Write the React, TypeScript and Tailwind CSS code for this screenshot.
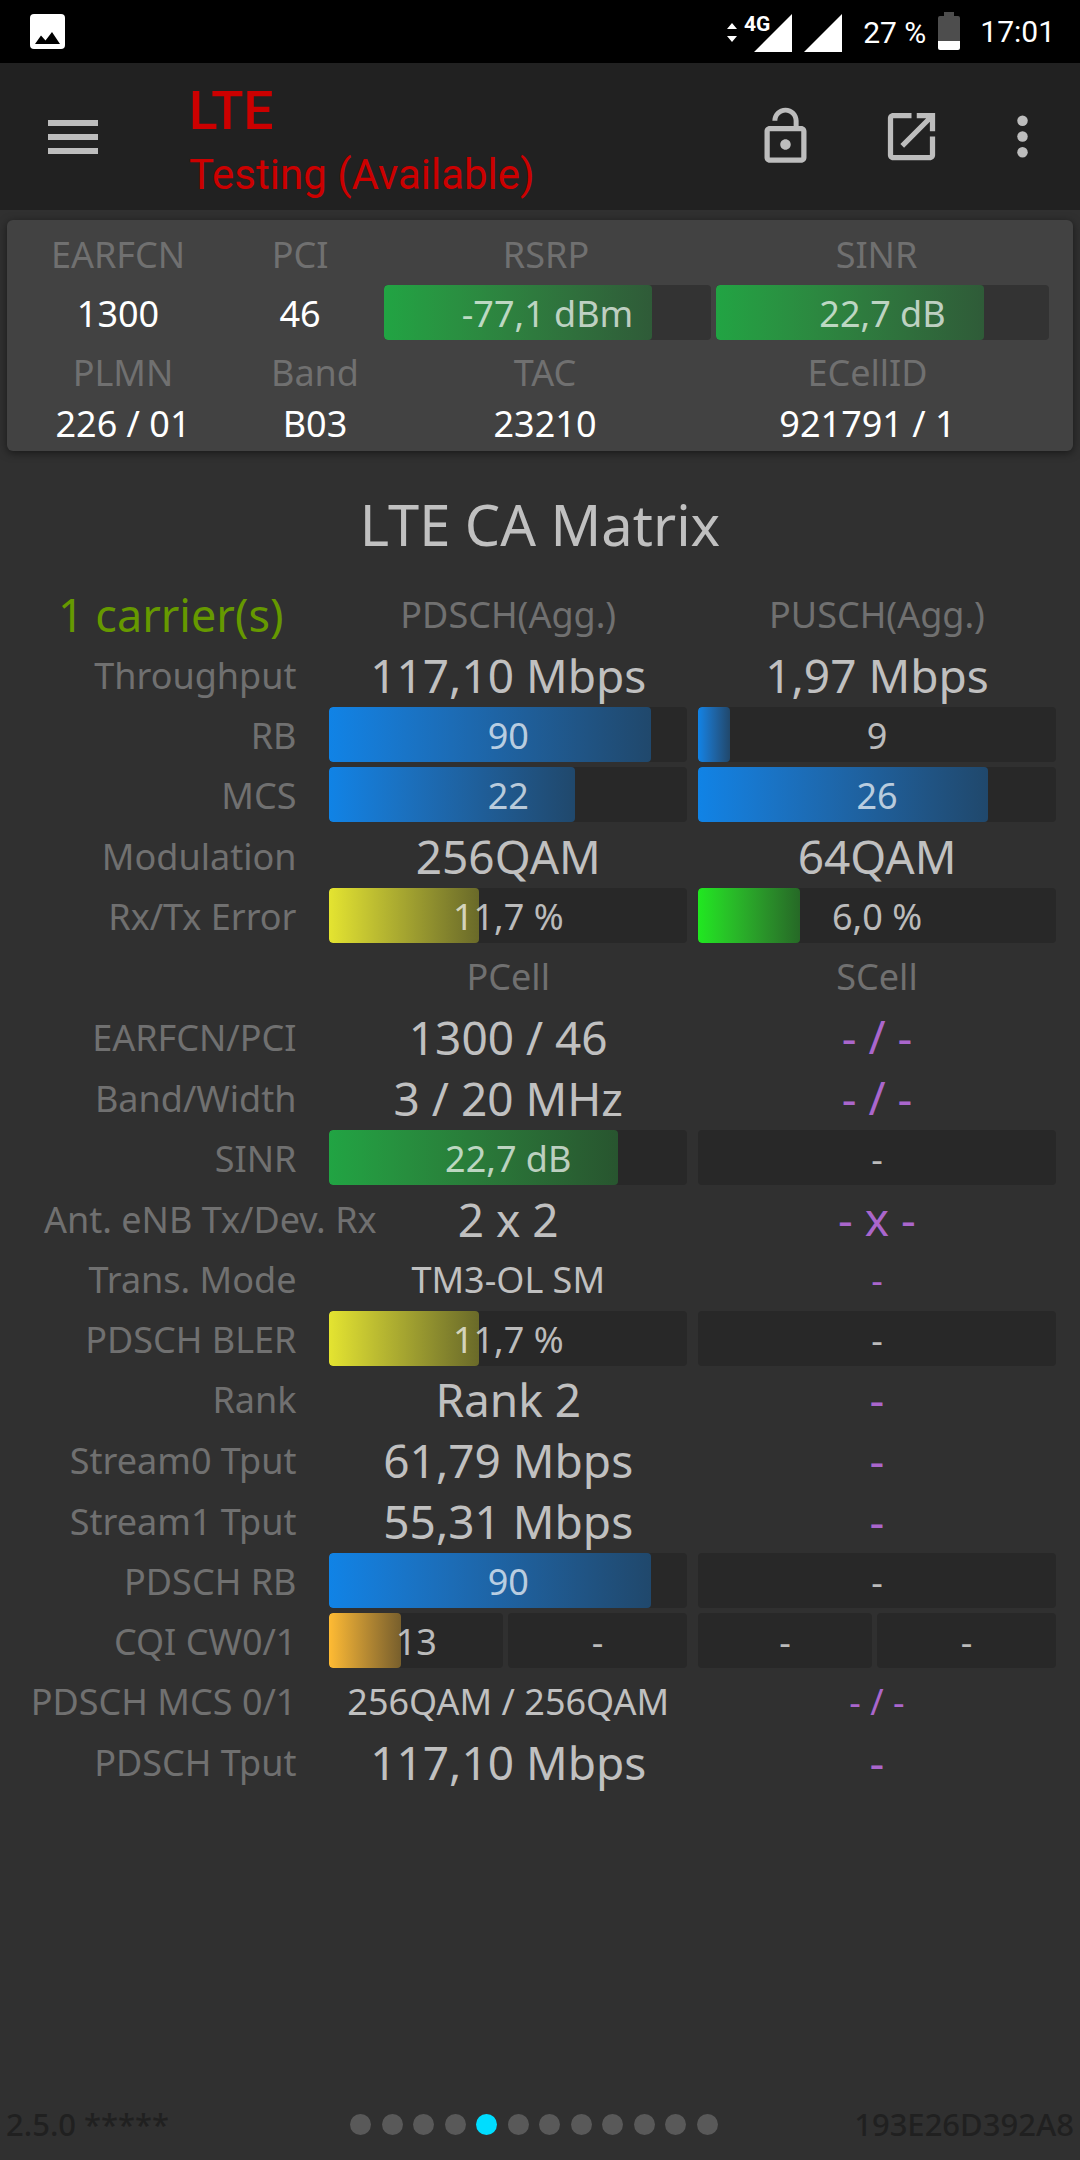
import type { ReactNode } from "react";

const LABEL = "text-[#707070] font-normal";

const FILLS = {
  green: "bg-linear-to-r from-[#21a443] to-[#28552f]",
  cardGreen: "bg-linear-to-r from-[#21a443] to-[#2f5b38]",
  blue: "bg-linear-to-r from-[#1083e6] to-[#20486c]",
  yellow: "bg-linear-to-r from-[#e4e430] to-[#6a6a29]",
  lime: "bg-linear-to-r from-[#20e820] to-[#266926]",
  orange: "bg-linear-to-r from-[#ffbb33] to-[#785f2c]",
};

type BarProps = {
  text: string;
  percent?: number;
  fill?: keyof typeof FILLS;
  track?: string;
};

function Bar({ text, percent = 0, fill = "blue", track = "bg-[#282828]" }: BarProps) {
  return (
    <div
      className={`relative flex h-[55px] w-full items-center justify-center overflow-hidden rounded pt-[2px] ${track}`}
    >
      <div
        className={`absolute inset-y-0 left-0 rounded ${FILLS[fill]}`}
        style={{ width: `${percent}%` }}
      />
      <span className="relative text-[36px] leading-[53px] whitespace-nowrap text-white/70">
        {text}
      </span>
    </div>
  );
}

function Big({ children }: { children: ReactNode }) {
  return <div className="pt-[2px] text-[46px] leading-[58px] text-[#c0c0c0]">{children}</div>;
}

function Small({ children }: { children: ReactNode }) {
  return <div className="pt-[3px] text-[36px] leading-[57px] text-[#c0c0c0]">{children}</div>;
}

function Empty({ children = "-", small = false }: { children?: ReactNode; small?: boolean }) {
  return (
    <div
      className={
        small
          ? "pt-[3px] text-[36px] leading-[57px] text-[#aa66cc]"
          : "text-[46px] leading-[60px] text-[#aa66cc]"
      }
    >
      {children}
    </div>
  );
}

type RowProps = {
  label: string;
  down: ReactNode;
  up: ReactNode;
  tall?: boolean;
  labelClass?: string;
};

function Row({ label, down, up, tall = false, labelClass = "text-right" }: RowProps) {
  return (
    <tr className={tall ? "h-[61px]" : "h-[60px]"}>
      <th
        scope="row"
        className={`p-0 pt-[3px] pr-[33px] text-[36px] leading-[57px] whitespace-nowrap ${LABEL} ${labelClass}`}
      >
        {label}
      </th>
      <td className="p-0 pr-[11px] text-center whitespace-nowrap">
        <div className="flex items-center justify-center">{down}</div>
      </td>
      <td className="p-0 text-center whitespace-nowrap">
        <div className="flex items-center justify-center">{up}</div>
      </td>
    </tr>
  );
}

function ColumnHead({ children }: { children: ReactNode }) {
  return <div className={`pt-[3px] text-[36px] leading-[57px] ${LABEL}`}>{children}</div>;
}

function StatusBar() {
  return (
    <div className="flex h-[63px] items-center justify-between bg-black pr-[25px] pl-[30px] font-[Roboto,sans-serif] text-[30px] leading-none text-white">
      <svg width="36" height="36" viewBox="0 0 36 36" aria-hidden="true">
        <rect x="0" y="0" width="35" height="35" rx="4" fill="#fff" />
        <path d="M5 30 11 21.500l4.500 5 6.500-8.500 8 12z" fill="#000" />
      </svg>
      <div className="flex items-center">
        <svg width="116" height="40" viewBox="0 0 116 40" aria-hidden="true">
          <path d="M0 17h10L5 11zM0 24h10L5 30z" fill="#fff" />
          <path d="M65 2v38H27zM115 2v38H77z" fill="#fff" />
          <text x="17" y="19" fontSize="21" fontWeight="700" fontFamily="Roboto, sans-serif" fill="#fff" stroke="#000" strokeWidth="3" paintOrder="stroke">
            4G
          </text>
        </svg>
        <span className="ml-5 pt-[2px]">27 %</span>
        <svg className="ml-3" width="22" height="39" viewBox="0 0 22 39" aria-hidden="true">
          <path d="M6 0h10v4h4a2 2 0 0 1 2 2v23H0V6a2 2 0 0 1 2-2h4z" fill="#4d4d4d" />
          <path d="M0 29h22v7a2 2 0 0 1-2 2H2a2 2 0 0 1-2-2z" fill="#fff" />
        </svg>
        <span className="ml-5">17:01</span>
      </div>
    </div>
  );
}

function AppHeader() {
  return (
    <header className="flex h-[147px] items-center bg-[#212121] pr-[10px] pl-12 text-[#bdbdbd]">
      <button type="button" aria-label="Open menu" className="flex h-[64px] w-[50px] items-center">
        <svg width="50" height="34" viewBox="0 0 50 34" fill="currentColor" aria-hidden="true">
          <path d="M0 0h50v6H0zM0 14h50v6H0zM0 28h50v6H0z" />
        </svg>
      </button>
      <div className="ml-[91px] flex-1 pt-[14px] font-[Roboto,sans-serif] text-[#cc0000]">
        <h1 className="text-[53px] leading-[62px] font-medium">LTE</h1>
        <p className="text-[42px] leading-[66px]">Testing (Available)</p>
      </div>
      <button type="button" aria-label="Unlock" className="flex w-[126px] justify-center">
        <svg width="63" height="63" viewBox="0 0 24 24" fill="currentColor" aria-hidden="true">
          <path d="M12 17c1.100 0 2-.9 2-2s-.9-2-2-2-2 .9-2 2 .9 2 2 2zm6-9h-1V6c0-2.760-2.240-5-5-5S7 3.240 7 6h1.900c0-1.710 1.390-3.100 3.100-3.100 1.710 0 3.100 1.390 3.100 3.100v2H6c-1.100 0-2 .9-2 2v10c0 1.100.9 2 2 2h12c1.100 0 2-.9 2-2V10c0-1.100-.9-2-2-2zm0 12H6V10h12v10z" />
        </svg>
      </button>
      <button type="button" aria-label="Open in new window" className="flex w-[126px] justify-center">
        <svg width="63" height="63" viewBox="0 0 24 24" fill="currentColor" aria-hidden="true">
          <path d="M19 19H5V5h7V3H5c-1.110 0-2 .9-2 2v14c0 1.100.89 2 2 2h14c1.100 0 2-.9 2-2v-7h-2v7zM14 3v2h3.590l-9.830 9.830 1.410 1.410L19 6.410V10h2V3h-7z" />
        </svg>
      </button>
      <button type="button" aria-label="More options" className="flex w-24 justify-center">
        <svg width="63" height="63" viewBox="0 0 24 24" fill="currentColor" aria-hidden="true">
          <circle cx="12" cy="6" r="2" />
          <circle cx="12" cy="12" r="2" />
          <circle cx="12" cy="18" r="2" />
        </svg>
      </button>
    </header>
  );
}

function SummaryCard() {
  return (
    <section className="mx-[7px] mt-[10px] rounded-md bg-[#424242] pt-2 pr-6 pb-[6px] pl-[13px] text-[36px] text-white shadow-[0_2px_8px_rgba(0,0,0,0.5)]">
      <div className="grid grid-cols-[196fr_168fr_332fr_333fr] items-center text-center">
        <div className={`leading-[54px] ${LABEL}`}>EARFCN</div>
        <div className={`leading-[54px] ${LABEL}`}>PCI</div>
        <div className={`pr-2 leading-[54px] ${LABEL}`}>RSRP</div>
        <div className={`pr-3 leading-[54px] ${LABEL}`}>SINR</div>
        <div className="pt-[3px] leading-[58px]">1300</div>
        <div className="pt-[3px] leading-[58px]">46</div>
        <div className="py-[3px] pr-[5px]">
          <Bar text="-77,1 dBm" percent={82} fill="cardGreen" track="bg-[#333333]" />
        </div>
        <div className="py-[3px]">
          <Bar text="22,7 dB" percent={80.5} fill="cardGreen" track="bg-[#333333]" />
        </div>
      </div>
      <div className="grid grid-cols-[206fr_178fr_282fr_363fr] text-center leading-[60px]">
        <div className={LABEL}>PLMN</div>
        <div className={LABEL}>Band</div>
        <div className={LABEL}>TAC</div>
        <div className={LABEL}>ECellID</div>
      </div>
      <div className="grid grid-cols-[206fr_178fr_282fr_363fr] text-center leading-[42px]">
        <div>226 / 01</div>
        <div>B03</div>
        <div>23210</div>
        <div>921791 / 1</div>
      </div>
    </section>
  );
}

function CarrierMatrix() {
  return (
    <main className="pr-6">
      <h2 className="pt-[33px] pl-6 text-center text-[56px] leading-[80px] text-[#c0c0c0]">LTE CA Matrix</h2>
      <table className="mt-[19px] w-full table-fixed border-collapse">
        <colgroup>
          <col className="w-[31.2%]" />
          <col className="w-[34.9%]" />
          <col className="w-[33.9%]" />
        </colgroup>
        <tbody>
          <tr className="h-[60px]">
            <th scope="col" className="p-0 pt-[3px] pr-[46px] text-right text-[45px] leading-[57px] font-normal whitespace-nowrap text-[#669900]">
              1 carrier(s)
            </th>
            <th scope="col" className="p-0 pr-[11px]">
              <ColumnHead>PDSCH(Agg.)</ColumnHead>
            </th>
            <th scope="col" className="p-0">
              <ColumnHead>PUSCH(Agg.)</ColumnHead>
            </th>
          </tr>
          <Row tall label="Throughput" down={<Big>117,10 Mbps</Big>} up={<Big>1,97 Mbps</Big>} />
          <Row label="RB" down={<Bar text="90" percent={90} />} up={<Bar text="9" percent={9} />} />
          <Row label="MCS" down={<Bar text="22" percent={68.7} />} up={<Bar text="26" percent={81} />} />
          <Row tall label="Modulation" down={<Big>256QAM</Big>} up={<Big>64QAM</Big>} />
          <Row
            label="Rx/Tx Error"
            down={<Bar text="11,7 %" percent={41.7} fill="yellow" />}
            up={<Bar text="6,0 %" percent={28.5} fill="lime" />}
          />
          <Row label="" down={<ColumnHead>PCell</ColumnHead>} up={<ColumnHead>SCell</ColumnHead>} />
          <Row tall label="EARFCN/PCI" down={<Big>1300 / 46</Big>} up={<Empty>- / -</Empty>} />
          <Row tall label="Band/Width" down={<Big>3 / 20 MHz</Big>} up={<Empty>- / -</Empty>} />
          <Row label="SINR" down={<Bar text="22,7 dB" percent={80.7} fill="green" />} up={<Bar text="-" />} />
          <Row
            tall
            label="Ant. eNB Tx/Dev. Rx"
            labelClass="pl-11 text-left"
            down={<Big>2 x 2</Big>}
            up={<Empty>- x -</Empty>}
          />
          <Row label="Trans. Mode" down={<Small>TM3-OL SM</Small>} up={<Empty small />} />
          <Row
            label="PDSCH BLER"
            down={<Bar text="11,7 %" percent={41.7} fill="yellow" />}
            up={<Bar text="-" />}
          />
          <Row label="Rank" down={<Big>Rank 2</Big>} up={<Empty />} />
          <Row tall label="Stream0 Tput" down={<Big>61,79 Mbps</Big>} up={<Empty />} />
          <Row tall label="Stream1 Tput" down={<Big>55,31 Mbps</Big>} up={<Empty />} />
          <Row label="PDSCH RB" down={<Bar text="90" percent={90} />} up={<Bar text="-" />} />
          <Row
            label="CQI CW0/1"
            down={
              <div className="grid w-full grid-cols-[174fr_179fr] gap-[5px]">
                <Bar text="13" percent={41} fill="orange" />
                <Bar text="-" />
              </div>
            }
            up={
              <div className="grid w-full grid-cols-[174fr_179fr] gap-[5px]">
                <Bar text="-" />
                <Bar text="-" />
              </div>
            }
          />
          <Row label="PDSCH MCS 0/1" down={<Small>256QAM / 256QAM</Small>} up={<Empty small>- / -</Empty>} />
          <Row tall label="PDSCH Tput" down={<Big>117,10 Mbps</Big>} up={<Empty />} />
        </tbody>
      </table>
    </main>
  );
}

function PageFooter() {
  const pages = Array.from({ length: 12 }, (_, i) => i);
  return (
    <footer className="mt-auto flex items-center px-[6px] pb-[13px] text-[31px] leading-[46px] font-medium text-[#202020]">
      <span className="flex-1">2.5.0 *****</span>
      <nav aria-label="Pages" className="flex w-[380px] justify-between pr-3">
        {pages.map((i) => (
          <button
            key={i}
            type="button"
            aria-label={`Page ${i + 1}`}
            className={i === 4 ? "size-[21px] rounded-full bg-[#00ddff]" : "size-[21px] rounded-full bg-[#595959]"}
          />
        ))}
      </nav>
      <span className="flex-1 text-right">193E26D392A8</span>
    </footer>
  );
}

export default function App() {
  return (
    <div className="flex min-h-screen flex-col bg-[#303030] font-['Noto_Sans','Open_Sans',sans-serif]">
      <StatusBar />
      <AppHeader />
      <SummaryCard />
      <CarrierMatrix />
      <PageFooter />
    </div>
  );
}
